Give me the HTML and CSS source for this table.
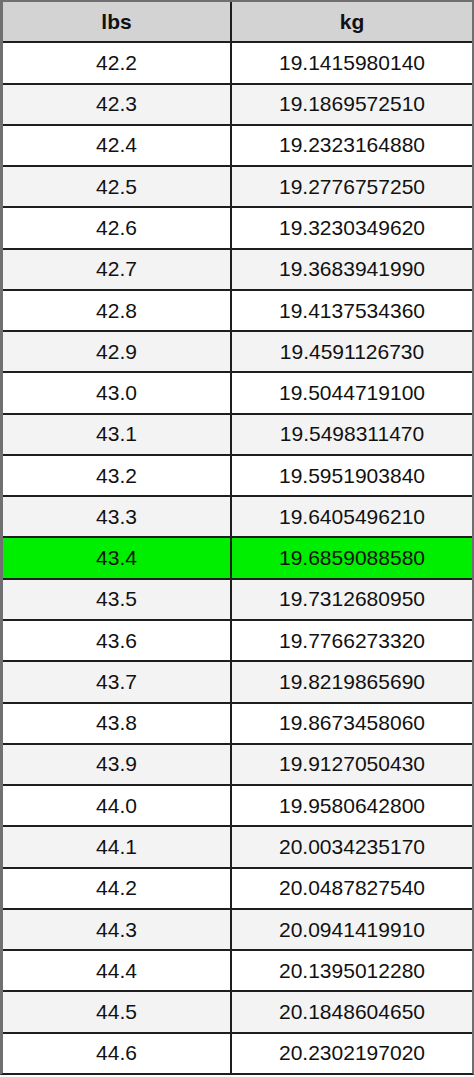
FILE: index.html
```html
<!DOCTYPE html>
<html>
<head>
<meta charset="utf-8">
<link rel="stylesheet" href="styles.css">
</head>
<body>
<div class="table">
  <div class="cell head">lbs</div><div class="cell head">kg</div>
  <div class="cell">42.2</div><div class="cell">19.1415980140</div>
  <div class="cell alt">42.3</div><div class="cell alt">19.1869572510</div>
  <div class="cell">42.4</div><div class="cell">19.2323164880</div>
  <div class="cell alt">42.5</div><div class="cell alt">19.2776757250</div>
  <div class="cell">42.6</div><div class="cell">19.3230349620</div>
  <div class="cell alt">42.7</div><div class="cell alt">19.3683941990</div>
  <div class="cell">42.8</div><div class="cell">19.4137534360</div>
  <div class="cell alt">42.9</div><div class="cell alt">19.4591126730</div>
  <div class="cell">43.0</div><div class="cell">19.5044719100</div>
  <div class="cell alt">43.1</div><div class="cell alt">19.5498311470</div>
  <div class="cell">43.2</div><div class="cell">19.5951903840</div>
  <div class="cell alt">43.3</div><div class="cell alt">19.6405496210</div>
  <div class="cell hl">43.4</div><div class="cell hl">19.6859088580</div>
  <div class="cell alt">43.5</div><div class="cell alt">19.7312680950</div>
  <div class="cell">43.6</div><div class="cell">19.7766273320</div>
  <div class="cell alt">43.7</div><div class="cell alt">19.8219865690</div>
  <div class="cell">43.8</div><div class="cell">19.8673458060</div>
  <div class="cell alt">43.9</div><div class="cell alt">19.9127050430</div>
  <div class="cell">44.0</div><div class="cell">19.9580642800</div>
  <div class="cell alt">44.1</div><div class="cell alt">20.0034235170</div>
  <div class="cell">44.2</div><div class="cell">20.0487827540</div>
  <div class="cell alt">44.3</div><div class="cell alt">20.0941419910</div>
  <div class="cell">44.4</div><div class="cell">20.1395012280</div>
  <div class="cell alt">44.5</div><div class="cell alt">20.1848604650</div>
  <div class="cell">44.6</div><div class="cell">20.2302197020</div>
</div>
</body>
</html>
```
FILE: styles.css
```css
html, body {
  margin: 0;
  padding: 0;
  background: #ffffff;
}
.table {
  box-sizing: border-box;
  width: 474px;
  height: 1075px;
  display: grid;
  grid-template-columns: 227px 1fr;
  grid-template-rows: repeat(26, 1fr);
  gap: 2px;
  background: #1e1e1e;
  border-top: 2px solid #6f6f6f;
  border-left: 3px solid #707070;
  border-right: 2px solid #6f6f6f;
  border-bottom: 2px solid #1e1e1e;
  font-family: "Liberation Sans", Arial, sans-serif;
  font-size: 21px;
  color: #111;
}
.cell {
  background: #ffffff;
  display: flex;
  align-items: center;
  justify-content: center;
}
.cell.alt {
  background: #f3f3f3;
}
.cell.head {
  background: #d3d3d3;
  font-weight: bold;
}
.cell.hl {
  background: #00ee00;
}
```
